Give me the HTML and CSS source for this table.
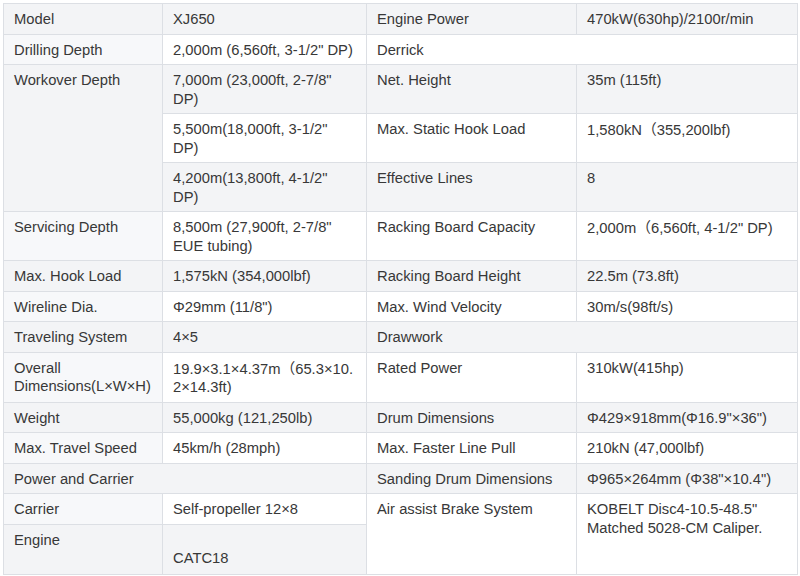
FILE: index.html
```html
<!DOCTYPE html>
<html lang="en">
<head>
<meta charset="utf-8">
<title>XJ650 Specifications</title>
<link rel="stylesheet" href="styles.css">
</head>
<body>
<div class="wrap">
<table class="spec">
<colgroup>
<col class="c1"><col class="c2"><col class="c3"><col class="c4">
</colgroup>
<tbody>
<tr><td class="k">Model</td><td>XJ650</td><td>Engine Power</td><td>470kW(630hp)/2100r/min</td></tr>
<tr><td class="k">Drilling Depth</td><td>2,000m (6,560ft, 3-1/2" DP)</td><td colspan="2">Derrick</td></tr>
<tr><td class="k" rowspan="3">Workover Depth</td><td>7,000m (23,000ft, 2-7/8"<br>DP)</td><td>Net. Height</td><td>35m (115ft)</td></tr>
<tr><td>5,500m(18,000ft, 3-1/2"<br>DP)</td><td>Max. Static Hook Load</td><td>1,580kN<span class="fw">（</span>355,200lbf)</td></tr>
<tr><td>4,200m(13,800ft, 4-1/2"<br>DP)</td><td>Effective Lines</td><td>8</td></tr>
<tr><td class="k">Servicing Depth</td><td>8,500m (27,900ft, 2-7/8"<br>EUE tubing)</td><td>Racking Board Capacity</td><td>2,000m<span class="fw">（</span>6,560ft, 4-1/2" DP)</td></tr>
<tr><td class="k">Max. Hook Load</td><td>1,575kN (354,000lbf)</td><td>Racking Board Height</td><td>22.5m (73.8ft)</td></tr>
<tr><td class="k">Wireline Dia.</td><td>Φ29mm (11/8")</td><td>Max. Wind Velocity</td><td>30m/s(98ft/s)</td></tr>
<tr><td class="k">Traveling System</td><td>4×5</td><td colspan="2">Drawwork</td></tr>
<tr><td class="k">Overall<br>Dimensions(L×W×H)</td><td>19.9×3.1×4.37m<span class="fw">（</span>65.3×10.<br>2×14.3ft)</td><td>Rated Power</td><td>310kW(415hp)</td></tr>
<tr><td class="k">Weight</td><td>55,000kg (121,250lb)</td><td>Drum Dimensions</td><td>Φ429×918mm(Φ16.9"×36")</td></tr>
<tr><td class="k">Max. Travel Speed</td><td>45km/h (28mph)</td><td>Max. Faster Line Pull</td><td>210kN (47,000lbf)</td></tr>
<tr><td class="k" colspan="2">Power and Carrier</td><td>Sanding Drum Dimensions</td><td>Φ965×264mm (Φ38"×10.4")</td></tr>
<tr><td class="k">Carrier</td><td>Self-propeller 12×8</td><td rowspan="2">Air assist Brake System</td><td rowspan="2">KOBELT Disc4-10.5-48.5"<br>Matched 5028-CM Caliper.</td></tr>
<tr class="last"><td class="k">Engine</td><td><br>CATC18</td></tr>
</tbody>
</table>
</div>
</body>
</html>
```

FILE: styles.css
```css
html, body {
  margin: 0;
  padding: 0;
  background: #ffffff;
}

.wrap {
  padding: 3px 3px 0 3px;
}

.spec {
  width: 794px;
  table-layout: fixed;
  border-collapse: collapse;
  font-family: "Liberation Sans", Arial, "Noto Sans CJK SC", sans-serif;
  font-size: 14.75px;
  line-height: 18.5px;
  color: #383838;
}

.c1 { width: 159px; }
.c2 { width: 204px; }
.c3 { width: 210px; }
.c4 { width: 221px; }

.spec td {
  border: 1px solid #dcdfe4;
  padding: 6px 5px 5px 10px;
  vertical-align: top;
  text-align: left;
  background: #ffffff;
  white-space: nowrap;
  overflow: hidden;
}

.spec tr:nth-child(even) td.k {
  background: #f7f8fa;
}

.spec tr:nth-child(odd) td {
  background: #f3f4f6;
}

.spec tr.last td {
  height: 38px;
}

.fw {
  font-family: "Noto Sans CJK SC", sans-serif;
}
```
